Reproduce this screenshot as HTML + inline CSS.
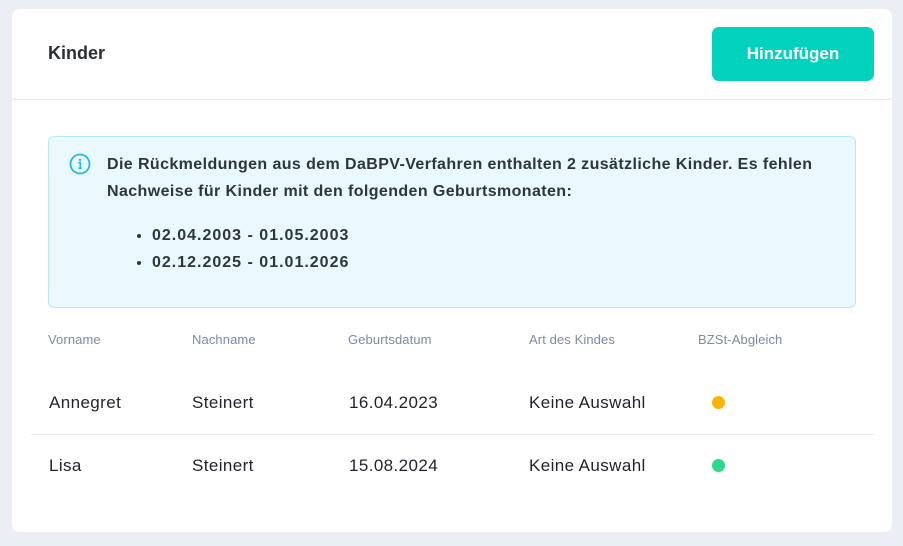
<!DOCTYPE html>
<html><head><meta charset="utf-8"><style>
*{margin:0;padding:0;box-sizing:border-box}
body{width:903px;height:546px;background:#ebeef5;font-family:"Liberation Sans",Arial,sans-serif;position:relative;overflow:hidden;color:#222}
.card{position:absolute;left:12px;top:9px;width:880px;height:523px;background:#fff;border-radius:8px}
.title{position:absolute;left:36px;top:34px;font-size:18px;font-weight:bold;color:#2a2f36}
.btn{position:absolute;left:700px;top:18px;width:162px;height:54px;background:#00d2bd;border-radius:7px;color:#fff;font-weight:bold;font-size:17px;text-align:center;line-height:53px}
.hr{position:absolute;left:0;top:90px;width:880px;height:1px;background:#e8eaee}
.info{position:absolute;left:36px;top:127px;width:808px;height:172px;background:#e9f9fd;border:1px solid #b5e9f6;border-radius:6px}
.info svg{position:absolute;left:20px;top:16px}
.txt{position:absolute;left:58px;top:14px;font-size:16px;font-weight:bold;color:#2e3440;line-height:27px;width:760px;letter-spacing:0.4px}
ul{position:absolute;left:103px;top:85px;font-size:16px;font-weight:bold;color:#2e3440;line-height:27px;letter-spacing:1px}
.th{position:absolute;top:323px;font-size:13px;color:#7f8aa3;letter-spacing:0.1px}
.td{position:absolute;font-size:17px;color:#1f232a;letter-spacing:0.4px}
.dot{position:absolute;width:13px;height:13px;border-radius:50%}
.rl{position:absolute;left:19px;top:425px;width:843px;height:1px;background:#e8eaf0}
</style></head><body>
<div class="card">
<div class="title">Kinder</div>
<div class="btn">Hinzufügen</div>
<div class="hr"></div>
<div class="info">
<svg width="22" height="22" viewBox="0 0 22 22"><circle cx="11" cy="11" r="9.5" fill="none" stroke="#29b6e8" stroke-width="1.8"/><circle cx="11" cy="6.8" r="1.2" fill="#29b6e8"/><path d="M9.3 9.6H11.3V15.2M9.3 15.2H12.8" fill="none" stroke="#29b6e8" stroke-width="1.6"/></svg>
<div class="txt">Die Rückmeldungen aus dem DaBPV-Verfahren enthalten 2 zusätzliche Kinder. Es fehlen Nachweise für Kinder mit den folgenden Geburtsmonaten:</div>
<ul><li>02.04.2003 - 01.05.2003</li><li>02.12.2025 - 01.01.2026</li></ul>
</div>
<div class="th" style="left:36px">Vorname</div>
<div class="th" style="left:180px">Nachname</div>
<div class="th" style="left:336px">Geburtsdatum</div>
<div class="th" style="left:517px">Art des Kindes</div>
<div class="th" style="left:686px">BZSt-Abgleich</div>
<div class="td" style="left:37px;top:384px">Annegret</div>
<div class="td" style="left:180px;top:384px">Steinert</div>
<div class="td" style="left:337px;top:384px">16.04.2023</div>
<div class="td" style="left:517px;top:384px">Keine Auswahl</div>
<div class="dot" style="left:700px;top:387px;background:#f8b400"></div>
<div class="rl"></div>
<div class="td" style="left:37px;top:447px">Lisa</div>
<div class="td" style="left:180px;top:447px">Steinert</div>
<div class="td" style="left:337px;top:447px">15.08.2024</div>
<div class="td" style="left:517px;top:447px">Keine Auswahl</div>
<div class="dot" style="left:700px;top:450px;background:#2bd98a"></div>
</div>
</body></html>
